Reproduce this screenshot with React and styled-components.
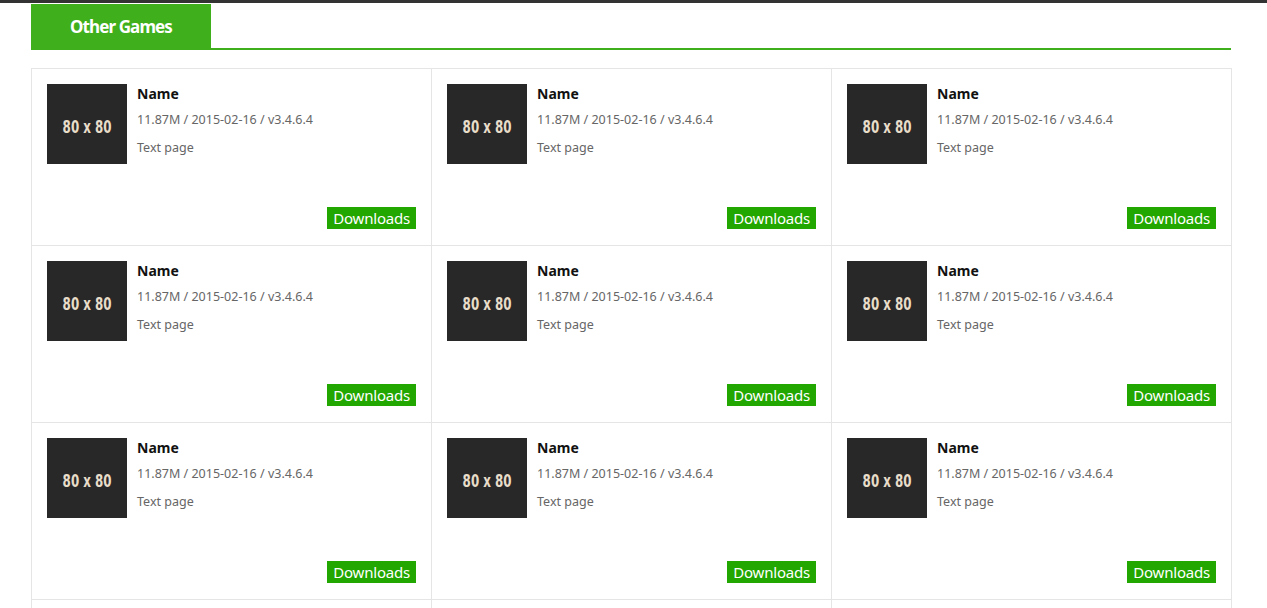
import React from "react";
import styled, { createGlobalStyle } from "styled-components";

const GlobalStyle = createGlobalStyle`
  body {
    margin: 0;
    background: #fff;
    font-family: "Noto Sans", "Liberation Sans", sans-serif;
    border-top: 3px solid #333;
  }
`;

const Wrapper = styled.div`
  width: 1200px;
  padding-left: 31px;
  padding-top: 1px;
`;

const TitleBar = styled.div`
  display: flex;
  border-bottom: 2px solid #3fb01c;
  height: 44px;
`;

const Tab = styled.h2`
  margin: 0;
  width: 180px;
  background: #3fb01c;
  color: #fff;
  font-size: 17px;
  font-weight: 700;
  letter-spacing: -0.9px;
  display: flex;
  align-items: center;
  justify-content: center;
`;

const Grid = styled.div`
  margin-top: 18px;
  display: grid;
  grid-template-columns: repeat(3, 400px);
  border-top: 1px solid #e5e5e5;
  border-left: 1px solid #e5e5e5;
  width: 1200px;
`;

const Card = styled.div`
  height: 177px;
  box-sizing: border-box;
  border-right: 1px solid #e5e5e5;
  border-bottom: 1px solid #e5e5e5;
  padding: 15px 15px 16px 15px;
  display: flex;
  flex-direction: column;
`;

const Top = styled.div`
  display: flex;
  gap: 10px;
`;

const Thumb = styled.div`
  width: 80px;
  height: 80px;
  flex-shrink: 0;
  box-sizing: border-box;
  padding-top: 5px;
  background: #282828;
  display: flex;
  align-items: center;
  justify-content: center;
`;

const ThumbLabel = styled.span`
  color: #e8ddc9;
  font-family: "DejaVu Sans", sans-serif;
  font-weight: 700;
  font-size: 18px;
  transform: scaleX(0.66);
  white-space: nowrap;
`;

const Info = styled.div`
  display: flex;
  flex-direction: column;
`;

const Name = styled.div`
  font-size: 14px;
  font-weight: 700;
  color: #111;
  line-height: 20px;
`;

const Meta = styled.div`
  font-size: 12.5px;
  color: #666;
  line-height: 16px;
  margin-top: ${(p) => p.$gap}px;
`;

const Footer = styled.div`
  margin-top: auto;
  display: flex;
  justify-content: flex-end;
`;

const DownloadBtn = styled.a`
  background: #22a600;
  color: #fff;
  font-size: 15px;
  line-height: 22px;
  height: 22px;
  padding: 0 6px;
  text-decoration: none;
  letter-spacing: -0.2px;
`;

const games = Array.from({ length: 12 }, (_, i) => ({
  id: i,
  name: "Name",
  size: "11.87M",
  date: "2015-02-16",
  version: "v3.4.6.4",
  note: "Text page",
}));

export default function App() {
  return (
    <Wrapper>
      <GlobalStyle />
      <TitleBar>
        <Tab>Other Games</Tab>
      </TitleBar>
      <Grid>
        {games.map((g) => (
          <Card key={g.id}>
            <Top>
              <Thumb>
                <ThumbLabel>80 x 80</ThumbLabel>
              </Thumb>
              <Info>
                <Name>{g.name}</Name>
                <Meta $gap={8}>
                  {g.size} / {g.date} / {g.version}
                </Meta>
                <Meta $gap={12}>{g.note}</Meta>
              </Info>
            </Top>
            <Footer>
              <DownloadBtn href="#">Downloads</DownloadBtn>
            </Footer>
          </Card>
        ))}
      </Grid>
    </Wrapper>
  );
}
